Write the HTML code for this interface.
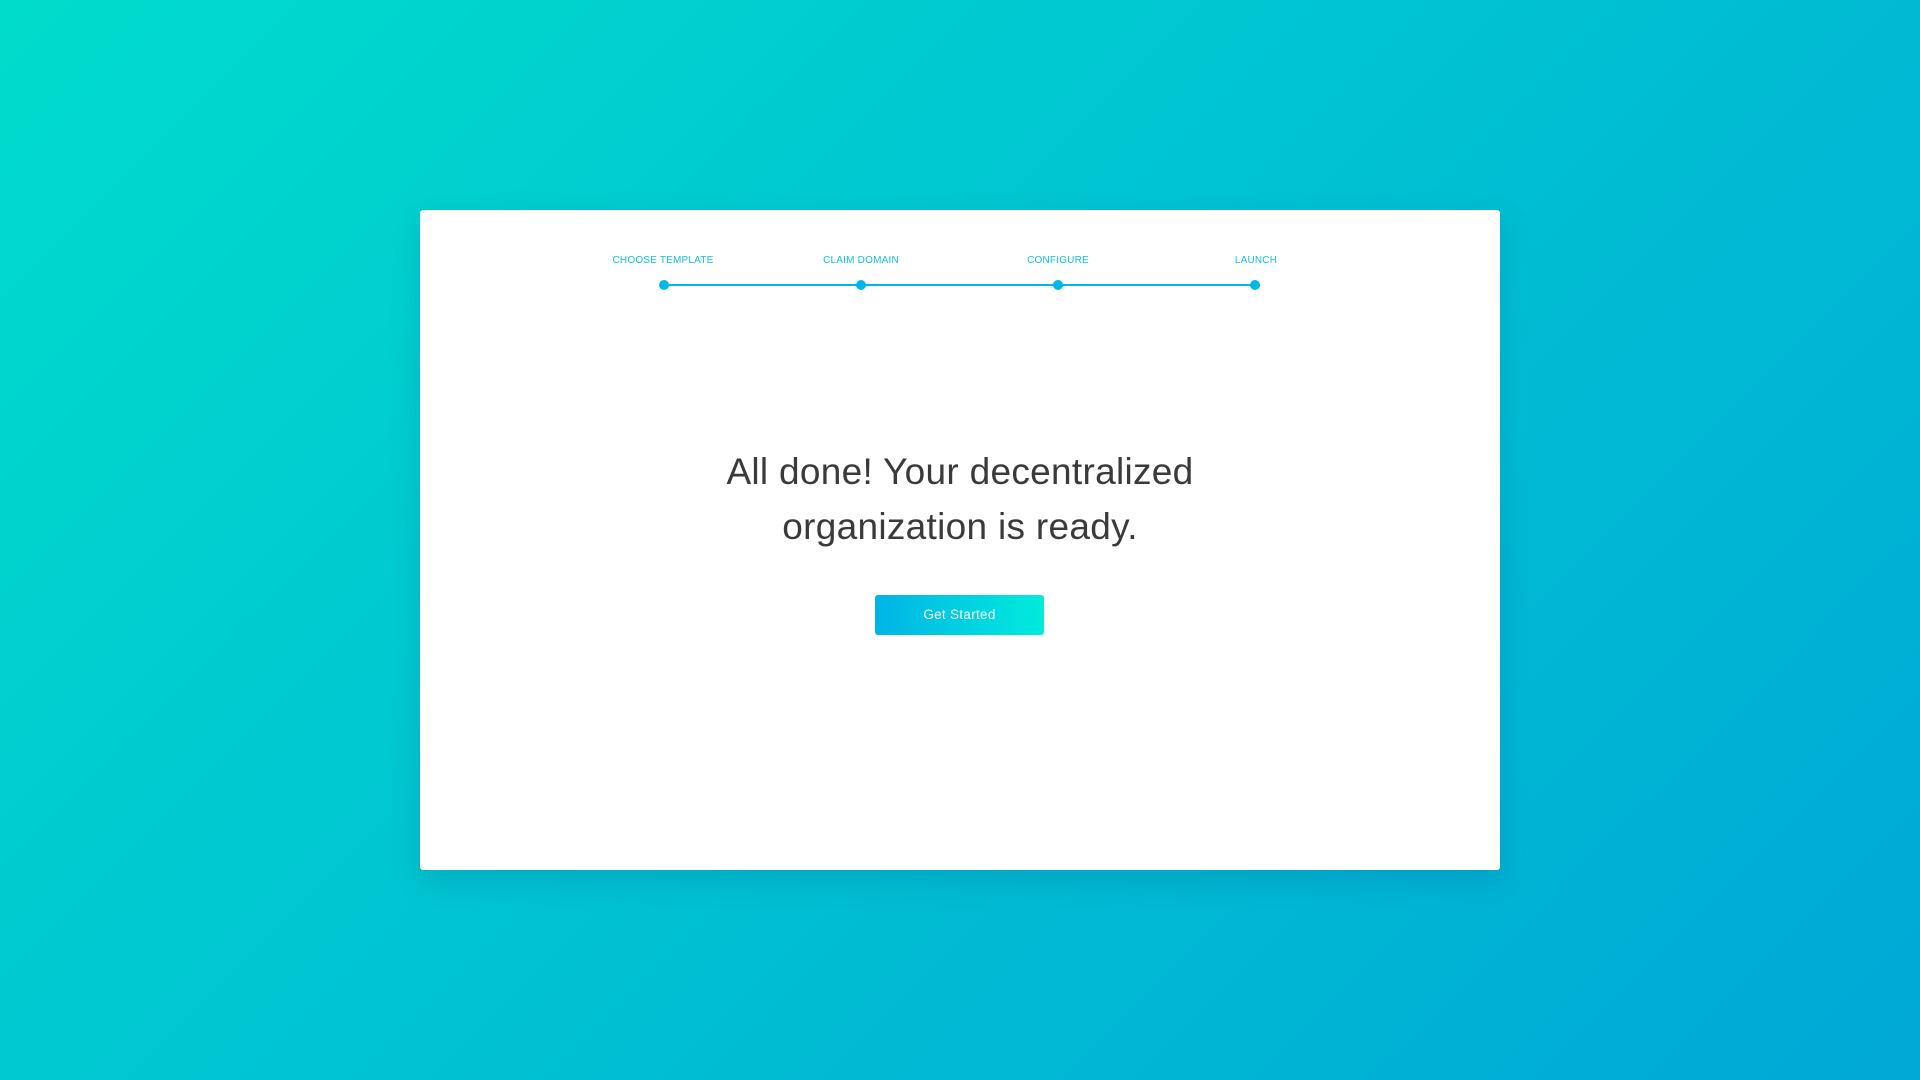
<!DOCTYPE html>
<html><head><style>
html,body{margin:0;padding:0;width:1920px;height:1080px;overflow:hidden}
body{background:linear-gradient(135deg,#00dccc 0%,#00c4d2 45%,#00a8d6 100%);font-family:"Liberation Sans",sans-serif;position:relative}
.card{position:absolute;left:420px;top:210px;width:1080px;height:660px;background:#fff;border-radius:3px;box-shadow:0 10px 30px rgba(0,80,120,0.2)}
.lbl{position:absolute;top:45px;font-size:10px;color:#10c0e0;letter-spacing:0.2px;transform:translateX(-50%);white-space:nowrap}
.line{position:absolute;left:244px;top:74px;width:591px;height:2px;background:#00b8e6}
.dot{position:absolute;top:70px;width:10px;height:10px;border-radius:50%;background:#00b8e6;transform:translateX(-50%)}
h1{position:absolute;left:0;right:0;top:234px;margin:0;text-align:center;font-weight:normal;font-size:37px;letter-spacing:0.3px;line-height:55px;color:#3a3a3a}
.btn{position:absolute;left:455px;top:385px;width:169px;height:40px;border-radius:3px;background:linear-gradient(90deg,#00b4e6,#00ebdc);color:#fff;font-size:13.5px;letter-spacing:0.3px;text-align:center;line-height:40px}
</style></head><body>
<div class="card">
<div class="lbl" style="left:243px">CHOOSE TEMPLATE</div>
<div class="lbl" style="left:441px">CLAIM DOMAIN</div>
<div class="lbl" style="left:638px">CONFIGURE</div>
<div class="lbl" style="left:836px">LAUNCH</div>
<div class="line"></div>
<div class="dot" style="left:244px"></div>
<div class="dot" style="left:441px"></div>
<div class="dot" style="left:638px"></div>
<div class="dot" style="left:835px"></div>
<h1>All done! Your decentralized<br>organization is ready.</h1>
<div class="btn">Get Started</div>
</div>
</body></html>
